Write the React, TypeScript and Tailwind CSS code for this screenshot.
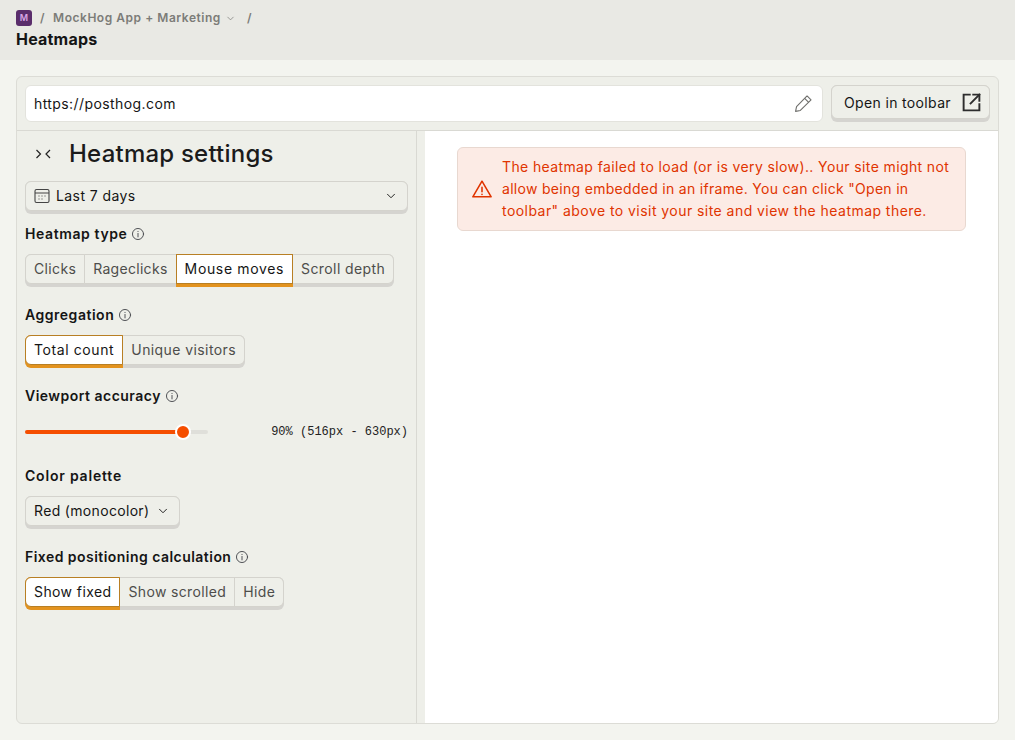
import { ChevronDown } from 'lucide-react';

const font = { fontFeatureSettings: '"calt" 0' };

type Option = { label: string; tracking: string };

function InfoIcon() {
  return (
    <svg width="14" height="14" viewBox="0 0 24 24" fill="none" stroke="#1d1f27" strokeWidth="1.6" strokeLinecap="round" className="opacity-80">
      <circle cx="12" cy="12" r="9.5" />
      <path d="M12 11v6M12 7.5v.3" />
    </svg>
  );
}

function SectionLabel({ children, info = true, tracking = 'tracking-[0.52px]' }: { children: string; info?: boolean; tracking?: string }) {
  return (
    <div className={`flex items-center gap-[4px] h-[20px] text-[14px] leading-[20px] font-semibold text-[#151515] ${tracking}`}>
      <span>{children}</span>
      {info && <InfoIcon />}
    </div>
  );
}

function SegmentedControl({ options, active }: { options: Option[]; active: string }) {
  return (
    <div className="flex items-start self-start h-[33px] rounded-[6px] bg-[#d5d4d0]">
      {options.map((option, i) => {
        const isActive = option.label === active;
        const first = i === 0;
        const last = i === options.length - 1;
        const corners = `${first ? 'rounded-l-[6px]' : ''} ${last ? 'rounded-r-[6px]' : ''}`;
        const prevActive = options[i - 1]?.label === active;
        const nextActive = options[i + 1]?.label === active;
        if (isActive) {
          return (
            <div key={option.label} className={`h-[33px] bg-[#e3931f] ${corners}`}>
              <div className={`h-[30px] px-[8px] pb-[2px] flex items-center bg-white border border-[#b87f24] text-[14px] text-[#151515] ${option.tracking} ${corners}`}>
                {option.label}
              </div>
            </div>
          );
        }
        return (
          <div
            key={option.label}
            className={`h-[30px] px-[8px] pb-[2px] flex items-center bg-[#eeefe9] border-y border-[#d4d3cd] text-[14px] text-[#4d4d4b] ${option.tracking} ${corners} ${first ? 'border-l' : ''} ${last ? 'border-r' : ''} ${!last && !nextActive ? 'border-r' : ''} ${prevActive ? 'border-l-0' : ''}`}
          >
            {option.label}
          </div>
        );
      })}
    </div>
  );
}

export default function App() {
  return (
    <div className="h-[740px] w-[1015px] overflow-hidden flex flex-col bg-[#f3f4ef] text-[#151515] font-['Inter',sans-serif]" style={font}>
      {/* Header */}
      <div className="h-[60px] shrink-0 bg-[#e9e9e4] pl-[16px] pt-[10px]">
        <div className="flex items-center h-[16px] text-[12px] font-semibold text-[#7c7c78] tracking-[0.53px]">
          <div className="w-[16px] h-[16px] rounded-[3px] bg-[#5a2d6b] text-[#d9a6e6] text-[9px] font-semibold flex items-center justify-center tracking-normal">M</div>
          <span className="ml-[8px]">/</span>
          <span className="ml-[8px]">MockHog App + Marketing</span>
          <ChevronDown size={11} className="ml-[4px]" strokeWidth={1.6} />
          <span className="ml-[11px]">/</span>
        </div>
        <div className="mt-[2px] text-[16px] leading-[22px] font-bold tracking-[0.2px] text-[#151515]">Heatmaps</div>
      </div>

      {/* Main card */}
      <div className="flex-1 min-h-0 px-[16px] pt-[16px] pb-[16px]">
        <div className="h-full flex flex-col rounded-[6px] border border-[#dcdcd6] bg-[#eeefe9] overflow-hidden">
          <div className="h-[54px] shrink-0 flex gap-[8px] px-[8px] pt-[8px] border-b border-[#d9d9d3]">
            <div className="flex-1 h-[37px] rounded-[6px] bg-white border border-[#e3e3dd] flex items-center justify-between pl-[8px] pr-[9px] text-[14px] tracking-[0.41px]">
              <span>https://posthog.com</span>
              <svg width="19" height="19" viewBox="0 0 24 24" fill="none" stroke="#6f6f6c" strokeWidth="1.4" strokeLinejoin="round">
                <path d="M2 22l1.2-6L16.5 2.5l5 5L8 20.8 2 22z" />
                <path d="M13.5 5.5l5 5" />
              </svg>
            </div>
            <div className="w-[159px] h-[37px] rounded-[6px] bg-[#d5d4d0]">
              <div className="h-[34px] rounded-[6px] bg-[#eeefe9] border border-[#d4d3cd] flex items-center justify-between pl-[12px] pr-[7px] text-[14px] tracking-[0.35px]">
                <span>Open in toolbar</span>
                <svg width="21" height="21" viewBox="0 0 24 24" fill="none" stroke="#2d2d2d" strokeWidth="2.2" strokeLinecap="square">
                  <path d="M10 3H3v18h18v-7" />
                  <path d="M21 3L11 13" />
                  <path d="M14 3h7v7" />
                </svg>
              </div>
            </div>
          </div>

          <div className="flex-1 min-h-0 flex">
            {/* Settings panel */}
            <div className="w-[400px] shrink-0 border-r border-[#d9d9d3] pl-[8px] pr-[8px] flex flex-col">
              <div className="h-[46px] shrink-0 flex items-center">
                <svg width="16" height="16" viewBox="0 0 16 16" fill="none" stroke="#222" strokeWidth="1.2" className="ml-[10px]">
                  <path d="M1.5 4l4 4-4 4M15 4l-4 4 4 4" />
                </svg>
                <span className="ml-[18px] text-[24px] leading-[32px] font-medium tracking-[0.22px] text-[#1b1b1b]">Heatmap settings</span>
              </div>

              <div className="w-[383px] h-[33px] rounded-[6px] bg-[#d5d4d0] mt-[4px] shrink-0">
                <div className="h-[30px] pb-[2px] rounded-[6px] bg-[#eeefe9] border border-[#d4d3cd] flex items-center pl-[8px] pr-[9px] text-[14px] tracking-[0.42px]">
                  <svg width="16" height="16" viewBox="0 0 16 16" fill="none" stroke="#444" strokeWidth="1.1" className="mr-[6px] mt-[1px]">
                    <rect x="1" y="1.5" width="14" height="13" rx="1.5" />
                    <path d="M1 5h14" />
                    <path d="M4.5 8h1M7.5 8h1M10.5 8h1M4.5 11h1M7.5 11h1" />
                  </svg>
                  <span className="flex-1">Last 7 days</span>
                  <ChevronDown size={14} strokeWidth={1.6} className="mt-[1px]" />
                </div>
              </div>

              <div className="mt-[10px] flex flex-col gap-[10px]">
                <SectionLabel tracking="tracking-[0.6px]">Heatmap type</SectionLabel>
                <SegmentedControl
                  active="Mouse moves"
                  options={[
                    { label: 'Clicks', tracking: 'tracking-[0.35px]' },
                    { label: 'Rageclicks', tracking: 'tracking-[0.3px]' },
                    { label: 'Mouse moves', tracking: 'tracking-[0.65px]' },
                    { label: 'Scroll depth', tracking: 'tracking-[0.4px]' },
                  ]}
                />
              </div>

              <div className="mt-[18px] flex flex-col gap-[10px]">
                <SectionLabel>Aggregation</SectionLabel>
                <SegmentedControl
                  active="Total count"
                  options={[
                    { label: 'Total count', tracking: 'tracking-[0.6px]' },
                    { label: 'Unique visitors', tracking: 'tracking-[0.41px]' },
                  ]}
                />
              </div>

              <div className="mt-[18px] flex flex-col">
                <SectionLabel tracking="tracking-[0.48px]">Viewport accuracy</SectionLabel>
                <div className="mt-[16px] h-[20px] flex items-center justify-between">
                  <div className="relative w-[183px] h-[4px] rounded-full bg-[#dfdfda]">
                    <div className="h-full w-[158px] rounded-full bg-[#f54e00]" />
                    <div className="absolute left-[150px] top-[-6px] w-[16px] h-[16px] rounded-full bg-[#f54e00] border-2 border-white" />
                  </div>
                  <span className="text-[12px] font-['Liberation_Mono',monospace] text-[#222]">90% (516px - 630px)</span>
                </div>
              </div>

              <div className="mt-[24px] flex flex-col gap-[10px]">
                <SectionLabel info={false} tracking="tracking-[0.8px]">Color palette</SectionLabel>
                <div className="w-[155px] h-[33px] rounded-[6px] bg-[#d5d4d0]">
                  <div className="h-[30px] pb-[2px] rounded-[6px] bg-[#eeefe9] border border-[#d4d3cd] flex items-center justify-between pl-[8px] pr-[9px] text-[14px] tracking-[0.33px]">
                    <span>Red (monocolor)</span>
                    <ChevronDown size={14} strokeWidth={1.6} className="mt-[1px]" />
                  </div>
                </div>
              </div>

              <div className="mt-[18px] flex flex-col gap-[10px]">
                <SectionLabel tracking="tracking-[0.46px]">Fixed positioning calculation</SectionLabel>
                <SegmentedControl
                  active="Show fixed"
                  options={[
                    { label: 'Show fixed', tracking: 'tracking-[0.4px]' },
                    { label: 'Show scrolled', tracking: 'tracking-[0.35px]' },
                    { label: 'Hide', tracking: 'tracking-[0.45px]' },
                  ]}
                />
              </div>
            </div>

            {/* Preview */}
            <div className="w-[8px] shrink-0" />
            <div className="flex-1 bg-white pt-[16px] pl-[32px] pr-[32px]">
              <div className="h-[84px] rounded-[6px] border border-[#e8d8d0] bg-[#fcebe5] flex items-center pl-[13px] pr-[12px] text-[14px] leading-[22px] text-[#e03400]">
                <svg width="22" height="22" viewBox="0 0 24 24" fill="none" stroke="#e03400" strokeWidth="1.7" strokeLinejoin="round" strokeLinecap="round" className="shrink-0 mr-[9px]">
                  <path d="M12 3.5L2 20.5h20L12 3.5z" />
                  <path d="M12 10v5M12 17.7v.2" />
                </svg>
                <div className="whitespace-nowrap">
                  <div className="tracking-[0.38px]">The heatmap failed to load (or is very slow).. Your site might not</div>
                  <div className="tracking-[0.3px]">allow being embedded in an iframe. You can click "Open in</div>
                  <div className="tracking-[0.45px]">toolbar" above to visit your site and view the heatmap there.</div>
                </div>
              </div>
            </div>
          </div>
        </div>
      </div>
    </div>
  );
}
